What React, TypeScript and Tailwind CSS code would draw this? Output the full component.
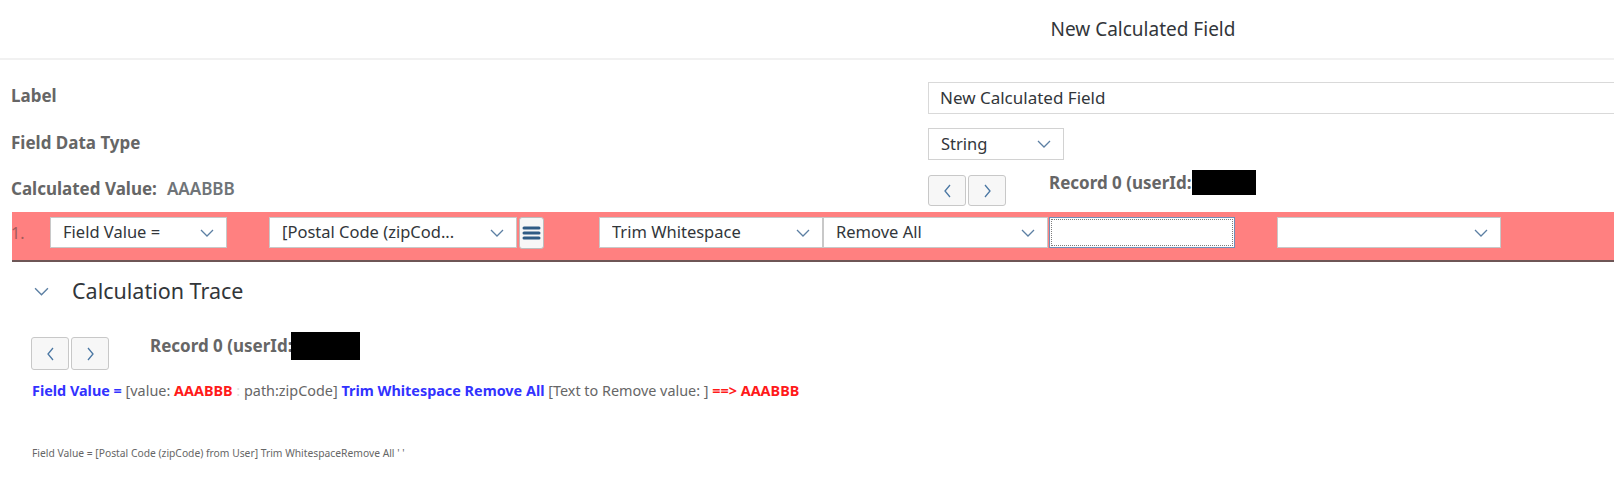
import React from 'react';

// Calculated-field editor: header, form rows, highlighted formula row and trace.

const font = { fontFamily: '"Noto Sans", Arial, sans-serif' };

function Chevron({ className = '' }: { className?: string }) {
  return (
    <svg width="14" height="8" viewBox="0 0 14 8" className={className}>
      <polyline points="1,1 7,7 13,1" fill="none" stroke="#5c7fa3" strokeWidth="1.3" />
    </svg>
  );
}

function Select({ label, w, className = '' }: { label?: string; w: string; className?: string }) {
  return (
    <div className={`${w} h-[31px] bg-white border border-[#c8c8c8] flex items-center justify-between pl-3 pr-3 shrink-0 ${className}`}>
      <span className="text-[16.5px] text-[#32363a] truncate">{label}</span>
      <Chevron className="shrink-0 ml-2" />
    </div>
  );
}

function NavButtons({ h }: { h: string }) {
  return (
    <div className="flex gap-[2px] shrink-0">
      {['M8 2 L3 8 L8 14', 'M3 2 L8 8 L3 14'].map(d => (
        <div key={d} className={`w-[38px] ${h} bg-[#f7f7f7] border border-[#c8c8c8] rounded-[3px] flex items-center justify-center`}>
          <svg width="11" height="16" viewBox="0 0 11 16">
            <path d={d} fill="none" stroke="#4a77a3" strokeWidth="1.3" />
          </svg>
        </div>
      ))}
    </div>
  );
}

export default function App() {
  return (
    <div className="w-full h-[478px] overflow-hidden bg-white" style={font}>
      <div className="w-[2286px]">
        {/* Header */}
        <div className="h-[60px] border-b-2 border-[#f1f1f1] flex items-center justify-center">
          <span className="text-[19px] text-[#32363a]">New Calculated Field</span>
        </div>

        {/* Form */}
        <div className="grid grid-cols-[928px_1fr] mt-[22px]">
          <div className="h-[32px] flex items-center pl-[11px] text-[17px] font-bold text-[#666] -translate-y-[2px]">Label</div>
          <div className="h-[32px] w-[800px] border border-[#d9d9d9] flex items-center pl-[11px] text-[17px] text-[#32363a]">
            New Calculated Field
          </div>

          <div className="h-[32px] mt-[14px] flex items-center pl-[11px] text-[17px] font-bold text-[#666] -translate-y-[1px]">Field Data Type</div>
          <div className="mt-[14px]">
            <Select label="String" w="w-[136px]" className="h-[32px] border-[#d2d2d2]" />
          </div>

          <div className="h-[30px] mt-[15px] flex items-center pl-[11px] text-[17px] font-bold text-[#666] -translate-y-[1px]">
            Calculated Value:
            <span className="ml-[10px] font-semibold text-[#6f7478]">AAABBB</span>
          </div>
          <div className="mt-[15px] flex items-start">
            <NavButtons h="h-[31px]" />
            <div className="ml-[43px] -mt-[5px] flex items-center">
              <span className="text-[17px] font-bold text-[#666]">Record 0 (userId:</span>
              <span className="w-[64px] h-[25px] bg-black" />
            </div>
          </div>
        </div>

        {/* Formula row */}
        <div className="ml-[12px] mt-[6px] h-[50px] bg-[#ff8080] border-b-2 border-[#6e5656] flex items-start pt-[5px]">
          <span className="w-[39px] h-[31px] flex items-center text-[16px] text-[#a35a5a] -ml-[1px]">1.</span>
          <Select label="Field Value =" w="w-[177px]" />
          <Select label="[Postal Code (zipCod..." w="w-[248px]" className="ml-[42px]" />
          <div className="w-[25px] h-[32px] ml-[2px] bg-[#f7f7f7] border border-[#bdbdbd] rounded-[3px] flex items-center justify-center">
            <svg width="19" height="14" viewBox="0 0 19 14">
              <g stroke="#2f5b85" strokeWidth="3" strokeLinecap="round">
                <line x1="2" y1="2" x2="17" y2="2" />
                <line x1="2" y1="7" x2="17" y2="7" />
                <line x1="2" y1="12" x2="17" y2="12" />
              </g>
            </svg>
          </div>
          <Select label="Trim Whitespace" w="w-[224px]" className="ml-[55px]" />
          <Select label="Remove All" w="w-[225px]" />
          <div className="w-[186px] h-[31px] ml-[1px] border border-[#6f8fb8] bg-white p-px">
            <div className="w-full h-full border border-dotted border-[#7d7d7d]" />
          </div>
          <Select w="w-[224px]" className="ml-[42px] justify-end" />
        </div>

        {/* Calculation trace */}
        <div className="h-[58px] flex items-center pl-[34px]">
          <Chevron className="w-[15px] h-[9px]" />
          <span className="ml-[23px] text-[21.5px] text-[#32363a]">Calculation Trace</span>
        </div>

        <div className="flex items-start pl-[31px] mt-[17px]">
          <NavButtons h="h-[33px]" />
          <div className="ml-[41px] -mt-[5px] flex items-center">
            <span className="text-[17px] font-bold text-[#666]">Record 0 (userId:</span>
            <span className="w-[69px] h-[28px] bg-black -ml-[2px]" />
          </div>
        </div>

        <div className="pl-[32px] mt-[11px] text-[14.4px] text-[#666] leading-[20px]">
          <span className="font-bold text-[#3232ff]">Field Value =</span> [value:{' '}
          <span className="font-bold text-[#ff1a1a]">AAABBB</span>
          <span className="text-[#e0e0e0]"> : </span>path:zipCode]{' '}
          <span className="font-bold text-[#3232ff]">Trim Whitespace Remove All</span> [Text to Remove value: ]{' '}
          <span className="font-bold text-[#ff1a1a]">==&gt; AAABBB</span>
        </div>

        <div className="pl-[32px] mt-[45px] text-[10.3px] text-[#666] leading-[15px]">
          Field Value = [Postal Code (zipCode) from User] Trim WhitespaceRemove All ' '
        </div>
      </div>
    </div>
  );
}
